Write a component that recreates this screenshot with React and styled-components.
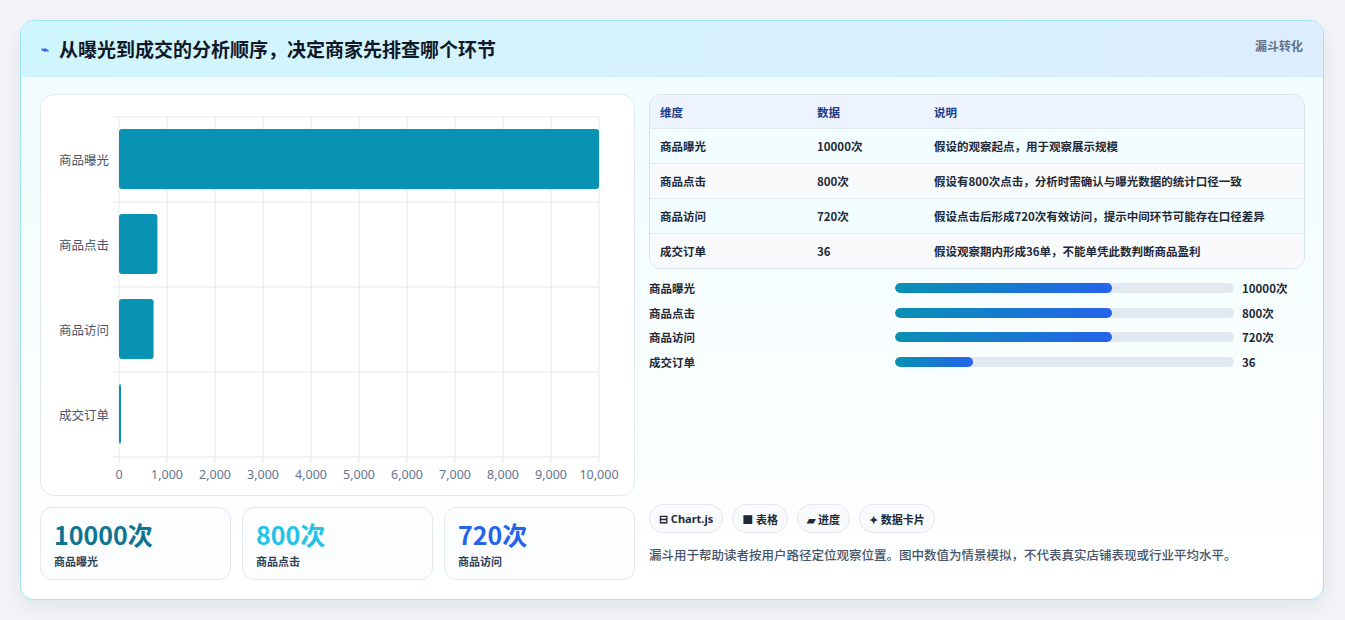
import React from "react";
import styled, { createGlobalStyle } from "styled-components";

const G = createGlobalStyle`
  body{margin:0;background:#f3f5f8;font-family:"Noto Sans CJK SC","Noto Sans",sans-serif;}
`;
const Page = styled.div`padding:20px 21px 20px 20px;height:620px;box-sizing:border-box;`;
const Card = styled.div`
  height:580px;box-sizing:border-box;border:1px solid #9fe3ee;border-radius:14px;overflow:hidden;
  background:linear-gradient(180deg,#effcfe 0%,#ffffff 100%);display:flex;flex-direction:column;
  box-shadow:0 8px 24px rgba(15,23,42,0.08);
`;
const Header = styled.div`
  height:55px;flex:none;display:flex;align-items:center;justify-content:space-between;padding:0 20px;
  background:linear-gradient(90deg,#cff6fd,#dcedfd);border-bottom:1px solid #cdeff5;
`;
const Title = styled.h1`margin:0;font-size:19px;font-weight:700;color:#111827;display:flex;align-items:center;gap:10px;`;
const Tag = styled.span`font-size:12px;font-weight:700;color:#64748b;align-self:flex-start;margin-top:16px;`;
const Body = styled.div`flex:1;display:grid;grid-template-columns:595px 1fr;gap:14px;padding:17px 18px 18px 19px;`;
const Left = styled.div`display:flex;flex-direction:column;gap:11px;`;
const ChartBox = styled.div`height:402px;box-sizing:border-box;border:1px solid #e2e8f0;border-radius:14px;background:#fff;`;
const Stats = styled.div`display:grid;grid-template-columns:repeat(3,1fr);gap:11px;`;
const Stat = styled.div`height:73px;box-sizing:border-box;border:1px solid #e2e8f0;border-radius:12px;background:#fbfdff;padding:9px 13px;`;
const StatV = styled.div`font-size:25px;font-weight:700;color:${p=>p.c};line-height:34px;`;
const StatL = styled.div`font-size:11px;color:#334155;font-weight:600;margin-top:2px;`;
const Right = styled.div`display:flex;flex-direction:column;`;
const Table = styled.div`border:1px solid #d6e4ee;border-radius:12px;overflow:hidden;background:#fff;`;
const Row = styled.div`
  display:grid;grid-template-columns:157px 117px 1fr;height:${p=>p.h?33:34}px;align-items:center;padding-left:10px;
  font-size:11.5px;color:${p=>p.h?"#1e3a8a":"#1f2937"};font-weight:600;
  background:${p=>p.h?"#eef4ff":p.alt?"#f8fafc":"#f2fdff"};
  border-top:${p=>p.first?"none":"1px solid #e2e8f0"};
`;
const Bars = styled.div`display:flex;flex-direction:column;gap:8px;margin-top:11px;`;
const BarRow = styled.div`display:grid;grid-template-columns:246px 339px 1fr;align-items:center;height:16.5px;gap:0;font-size:11.5px;font-weight:600;color:#1f2937;`;
const Track = styled.div`height:10px;border-radius:5px;background:#e2e8f0;overflow:hidden;`;
const Fill = styled.div`height:100%;border-radius:5px;background:linear-gradient(90deg,#0891b2,#2563eb);`;
const Val = styled.span`padding-left:8px;font-weight:700;`;
const Spacer = styled.div`flex:1;`;
const Chips = styled.div`display:flex;gap:9px;`;
const Chip = styled.span`height:27px;padding:0 9px;border:1px solid #e2e8f0;border-radius:14px;background:#f8fafc;display:flex;align-items:center;gap:4px;font-size:11px;font-weight:700;color:#1f2937;font-family:"Noto Sans","Noto Sans CJK SC",sans-serif;`;
const Note = styled.p`margin:12px 0 17px;font-size:12.5px;color:#475569;font-weight:500;`;

const cats=[["商品曝光",10000],["商品点击",800],["商品访问",720],["成交订单",36]];

function Chart(){
  const x0=78,w=480,y0=22,rh=85;
  return (
    <svg width="595" height="402" style={{display:"block"}}>
      {Array.from({length:11}).map((_,i)=>(
        <g key={i}>
          <line x1={x0+i*48} x2={x0+i*48} y1={y0} y2={y0+rh*4+6} stroke="#e5e7eb"/>
          <text x={x0+i*48} y={384} fontSize="12.5" fill="#64748b" textAnchor="middle" fontFamily="Noto Sans">{(i*1000).toLocaleString("en-US")}</text>
        </g>
      ))}
      {[0,1,2,3,4].map(i=><line key={i} x1={x0-6} x2={x0+w} y1={y0+i*rh} y2={y0+i*rh} stroke="#e5e7eb"/>)}
      {cats.map(([n,v],i)=>(
        <g key={n}>
          <rect x={x0} y={y0+i*rh+12} width={Math.max(2,v/10000*w)} height={60} rx="3" fill="#0893b4"/>
          <text x={68} y={y0+i*rh+48} fontSize="12.5" fill="#475569" textAnchor="end" fontFamily="Noto Sans CJK SC">{n}</text>
        </g>
      ))}
    </svg>
  );
}

export default function App(){
  return (<Page><G/><Card>
    <Header><Title><span style={{color:"#2563eb",fontSize:13}}>⌁</span>从曝光到成交的分析顺序，决定商家先排查哪个环节</Title><Tag>漏斗转化</Tag></Header>
    <Body>
      <Left>
        <ChartBox><Chart/></ChartBox>
        <Stats>
          <Stat><StatV c="#0e7490">10000次</StatV><StatL>商品曝光</StatL></Stat>
          <Stat><StatV c="#22c3e6">800次</StatV><StatL>商品点击</StatL></Stat>
          <Stat><StatV c="#2563eb">720次</StatV><StatL>商品访问</StatL></Stat>
        </Stats>
      </Left>
      <Right>
        <Table>
          <Row h first><span>维度</span><span>数据</span><span>说明</span></Row>
          <Row><span>商品曝光</span><span>10000次</span><span>假设的观察起点，用于观察展示规模</span></Row>
          <Row alt><span>商品点击</span><span>800次</span><span>假设有800次点击，分析时需确认与曝光数据的统计口径一致</span></Row>
          <Row><span>商品访问</span><span>720次</span><span>假设点击后形成720次有效访问，提示中间环节可能存在口径差异</span></Row>
          <Row alt><span>成交订单</span><span>36</span><span>假设观察期内形成36单，不能单凭此数判断商品盈利</span></Row>
        </Table>
        <Bars>
          {[["商品曝光","10000次",64],["商品点击","800次",64],["商品访问","720次",64],["成交订单","36",23]].map(([n,v,p])=>(
            <BarRow key={n}><span>{n}</span><Track><Fill style={{width:p+"%"}}/></Track><Val>{v}</Val></BarRow>
          ))}
        </Bars>
        <Spacer/>
        <Chips>
          <Chip>⊟ Chart.js</Chip><Chip>■ 表格</Chip><Chip>▰ 进度</Chip><Chip>✦ 数据卡片</Chip>
        </Chips>
        <Note>漏斗用于帮助读者按用户路径定位观察位置。图中数值为情景模拟，不代表真实店铺表现或行业平均水平。</Note>
      </Right>
    </Body>
  </Card></Page>);
}
